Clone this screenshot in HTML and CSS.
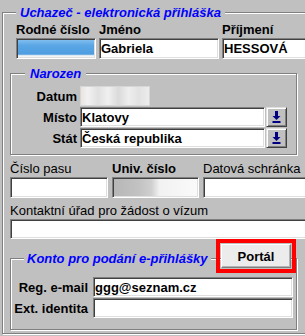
FILE: index.html
```html
<!DOCTYPE html>
<html lang="cs">
  <head>
    <meta charset="utf-8">
    <title>Uchazeč - elektronická přihláška</title>
    <link rel="stylesheet" href="styles.css">
  </head>
  <body>
    <fieldset class="group applicant">
      <legend>Uchazeč - elektronická přihláška</legend>

      <section class="ident">
        <span class="cap">Rodné číslo</span>
        <span class="cap">Jméno</span>
        <span class="cap">Příjmení</span>
        <input class="field blur-blue" type="text" value="">
        <input class="field" type="text" value="Gabriela">
        <input class="field" type="text" value="HESSOVÁ">
      </section>

      <fieldset class="group born">
        <legend>Narozen</legend>
        <div class="rows">
          <span class="cap">Datum</span>
          <input class="field short blur-light" type="text" value="">
          <span></span>

          <span class="cap">Místo</span>
          <input class="field" type="text" value="Klatovy">
          <button class="pick" type="button">
            <svg width="9" height="12" viewBox="0 0 9 12"><path d="M3 0h3v5h2.5L4.5 9 0.5 5H3z M0.5 10h8v2h-8z" fill="#000080"/></svg>
          </button>

          <span class="cap">Stát</span>
          <input class="field" type="text" value="Česká republika">
          <button class="pick" type="button">
            <svg width="9" height="12" viewBox="0 0 9 12"><path d="M3 0h3v5h2.5L4.5 9 0.5 5H3z M0.5 10h8v2h-8z" fill="#000080"/></svg>
          </button>
        </div>
      </fieldset>

      <section class="docs">
        <span>Číslo pasu</span>
        <span class="cap">Univ. číslo</span>
        <span>Datová schránka</span>
        <input class="field" type="text" value="">
        <input class="field blur-grey" type="text" value="">
        <input class="field" type="text" value="">
      </section>

      <section class="contact">
        <span>Kontaktní úřad pro žádost o vízum</span>
        <input class="field thin" type="text" value="">
      </section>

      <div class="account">
        <fieldset class="group konto">
          <legend>Konto pro podání e-přihlášky</legend>
          <div class="rows">
            <span class="cap">Reg. e-mail</span>
            <input class="field" type="text" value="ggg@seznam.cz">
            <span class="cap">Ext. identita</span>
            <input class="field" type="text" value="">
          </div>
        </fieldset>
        <div class="portal-mark">
          <button class="portal" type="button">Portál</button>
        </div>
      </div>
    </fieldset>
  </body>
</html>
```

FILE: styles.css
```css
:root {
  --face: #c0c0c0;
  --shadow: #808080;
  --dark: #404040;
  --light: #dfdfdf;
  --legend: #0000ff;
}

body {
  margin: 0;
  height: 336px;
  overflow: hidden;
  background: var(--face);
  font: 13px/15px "Liberation Sans", Arial, sans-serif;
  color: #000;
}

/* etched group boxes */
.group {
  margin: 0;
  min-width: 0;
  border: 1px solid var(--shadow);
  box-shadow: inset 1px 1px 0 #fff, 1px 1px 0 #fff;
}
  .group > legend {
    background: var(--face);
    color: var(--legend);
    font-weight: bold;
    font-style: italic;
    line-height: 15px;
  }

.applicant {
  width: 330px;
  box-sizing: border-box;
  margin: 5px 0 0 2px;
  padding: 2px 0 3px 7px;
}
  .applicant > legend {
    margin-left: 6px;
    padding: 0 4px;
  }

.cap {
  font-weight: bold;
}

/* inputs */
.field {
  box-sizing: border-box;
  width: 100%;
  height: 21px;
  margin: 0;
  padding: 0 1px;
  border: 1px solid;
  border-color: var(--shadow) #fff #fff var(--shadow);
  box-shadow: inset 1px 1px 0 var(--dark), inset -1px -1px 0 var(--light);
  background: #fff;
  font: bold 13px "Liberation Sans", Arial, sans-serif;
  color: #000;
  outline: none;
}
  .field.thin { height: 20px; }
  .field.short { width: 70px; }

.blur-blue {
  background: linear-gradient(180deg, #86c2f0, #5aa6e6 35%, #4e9de0 80%, #f4f4f4 88%);
}
.blur-light {
  border-color: #d6d6d6;
  box-shadow: none;
  background: linear-gradient(90deg, #e8e4e0 0, #f2f2f2 10%, #e0e0e0 25%, #f0f0f0 40%, #dadada 55%, #eeeeee 70%, #e2e2e2 85%, #ececec);
}
.blur-grey {
  background: linear-gradient(90deg, #b6b6b6, #c2c2c2 30%, #cfcfcf 45%, #f2f2f2 55%, #fafafa);
}

/* applicant name */
.ident {
  display: grid;
  grid-template-columns: 80px 120px 1fr;
  column-gap: 3px;
  margin-left: 6px;
  line-height: 16px;
}

/* birth */
.born {
  box-sizing: border-box;
  width: 287px;
  margin-top: 7px;
  padding: 5px 9px 6px 4px;
}
  .born > legend {
    margin-left: 10px;
    padding: 0 5px;
  }
  .born .rows {
    display: grid;
    grid-template-columns: 65px 185px 22px;
    grid-auto-rows: 20px;
    row-gap: 1px;
    align-items: center;
  }
  .born .rows .cap {
    text-align: right;
    padding-right: 3px;
  }
  .born .field { height: 20px; }

.pick {
  box-sizing: border-box;
  width: 21px;
  height: 20px;
  margin: 0 0 0 1px;
  padding: 0;
  border: 1px solid;
  border-color: var(--light) var(--dark) var(--dark) var(--light);
  box-shadow: inset 1px 1px 0 #fff, inset -1px -1px 0 var(--shadow);
  background: var(--face);
  display: flex;
  align-items: center;
  justify-content: center;
}

/* documents */
.docs {
  display: grid;
  grid-template-columns: 98px 87px 1fr;
  column-gap: 4px;
  margin-top: 6px;
  line-height: 16px;
}

.contact {
  display: flex;
  flex-direction: column;
  margin-top: 5px;
  line-height: 16px;
}

/* account */
.account {
  position: relative;
  margin-top: 12px;
}

.konto {
  box-sizing: border-box;
  width: 287px;
  padding: 11px 3px 11px 3px;
}
  .konto > legend {
    margin-left: 10px;
    padding: 0 3px;
  }
  .konto .rows {
    display: grid;
    grid-template-columns: 74px 200px;
    grid-auto-rows: 20px;
    column-gap: 5px;
    row-gap: 1px;
    align-items: center;
  }
  .konto .rows .cap { text-align: right; }
  .konto .field { height: 20px; }

.portal-mark {
  position: absolute;
  left: 206px;
  top: -12px;
  box-sizing: border-box;
  width: 80px;
  height: 34px;
  padding: 1px;
  border: 4px solid #f00;
}

.portal {
  box-sizing: border-box;
  width: 100%;
  height: 100%;
  padding: 0;
  border: 1px solid;
  border-color: #fff var(--shadow) var(--shadow) #fff;
  box-shadow: inset -1px -1px 0 #b4b4b4;
  background: #ececec;
  font: bold 13px "Liberation Sans", Arial, sans-serif;
  color: #000;
}
```
